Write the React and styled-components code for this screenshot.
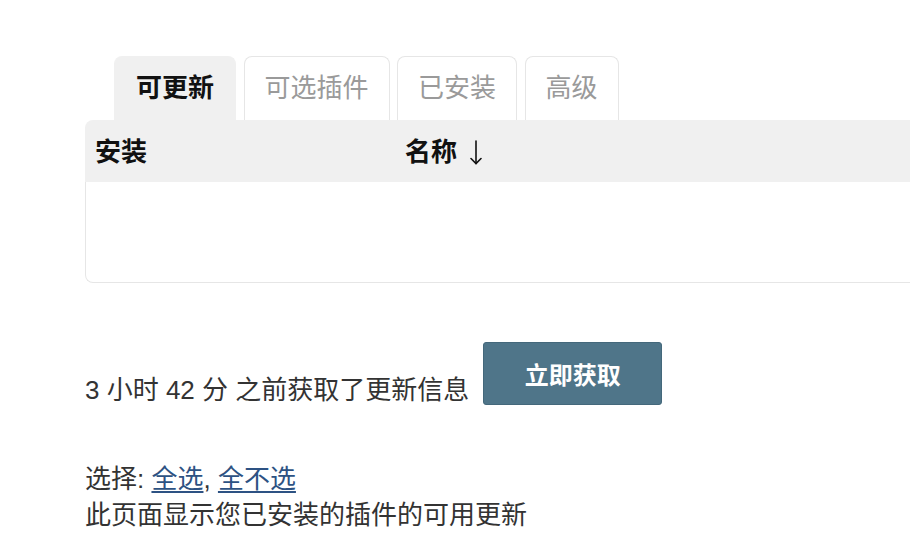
import React, { useState } from 'react';
import styled, { createGlobalStyle } from 'styled-components';

const GlobalStyle = createGlobalStyle`
    html, body {
        margin: 0;
        padding: 0;
        background: #fff;
        overflow: hidden;
    }
    body {
        font-family: "Liberation Sans", "Noto Sans CJK SC", sans-serif;
        color: #333;
    }
`;

const Page = styled.div`
    padding: 56px 0 0 85px;
`;

const TabBar = styled.div`
    display: flex;
    gap: 7.5px;
    margin-left: 29px;
`;

const Tab = styled.button`
    height: 64px;
    padding: 0 ${({ active }) => active ? '21px' : '20px'};
    font-family: inherit;
    font-size: 26px;
    line-height: 1;
    padding-bottom: 2px;
    font-weight: ${({ active }) => active ? '700' : '400'};
    color: ${({ active }) => active ? '#111' : '#9a9a9a'};
    background: ${({ active }) => active ? '#f0f0f0' : '#fff'};
    border: 1px solid ${({ active }) => active ? '#f0f0f0' : '#e6e6e6'};
    border-bottom: none;
    border-radius: 8px 8px 0 0;
    cursor: pointer;
`;

const Table = styled.div`
    display: flex;
    flex-direction: column;
`;

const HeaderRow = styled.div`
    display: flex;
    align-items: center;
    height: 62px;
    padding-bottom: 3px;
    box-sizing: border-box;
    background: #f0f0f0;
    border-radius: 8px 0 0 0;
    font-size: 26px;
    font-weight: 700;
    color: #111;
`;

const HeaderCell = styled.div`
    display: flex;
    align-items: center;
    width: ${({ width }) => width || 'auto'};
    padding-left: 10px;
    box-sizing: border-box;
`;

const ArrowIcon = styled.svg`
    margin-left: 13px;
    margin-top: 6px;
`;

const Body = styled.div`
    height: 100px;
    border-left: 1px solid #e6e6e6;
    border-bottom: 1px solid #e6e6e6;
    border-radius: 0 0 0 8px;
`;

const FetchRow = styled.div`
    display: flex;
    align-items: flex-end;
    gap: 14px;
    margin-top: 59px;
`;

const FetchText = styled.span`
    font-size: 26px;
    line-height: 30px;
`;

const FetchButton = styled.button`
    width: 179px;
    height: 63px;
    background: #4f7589;
    border: 1px solid #44687b;
    border-radius: 3px;
    color: #fff;
    font-family: inherit;
    font-size: 24px;
    font-weight: 700;
    padding-bottom: 2px;
    cursor: pointer;
`;

const Info = styled.div`
    margin-top: 56px;
    font-size: 26px;
    line-height: 36px;
`;

const Link = styled.a`
    color: #2d5283;
    text-decoration: underline;
    text-underline-offset: 3px;
    cursor: pointer;
`;

const tabs = ['可更新', '可选插件', '已安装', '高级'];

const App = () => {
    const [active, setActive] = useState(0);

    return (
        <>
            <GlobalStyle />
            <Page>
                <TabBar>
                    {tabs.map((t, i) => (
                        <Tab key={t} active={i === active} onClick={() => setActive(i)}>{t}</Tab>
                    ))}
                </TabBar>
                <Table>
                    <HeaderRow>
                        <HeaderCell width="310px">安装</HeaderCell>
                        <HeaderCell>
                            名称
                            <ArrowIcon width="12" height="25" viewBox="0 0 12 25" fill="none" stroke="#111" strokeWidth="1.6" strokeLinecap="round">
                                <path d="M6 1 V23.5" />
                                <path d="M1 18.5 L6 23.5 L11 18.5" />
                            </ArrowIcon>
                        </HeaderCell>
                    </HeaderRow>
                    <Body />
                </Table>
                <FetchRow>
                    <FetchText>3 小时 42 分 之前获取了更新信息</FetchText>
                    <FetchButton>立即获取</FetchButton>
                </FetchRow>
                <Info>
                    <div>选择: <Link>全选</Link>, <Link>全不选</Link></div>
                    <div>此页面显示您已安装的插件的可用更新</div>
                </Info>
            </Page>
        </>
    );
};

export default App;
